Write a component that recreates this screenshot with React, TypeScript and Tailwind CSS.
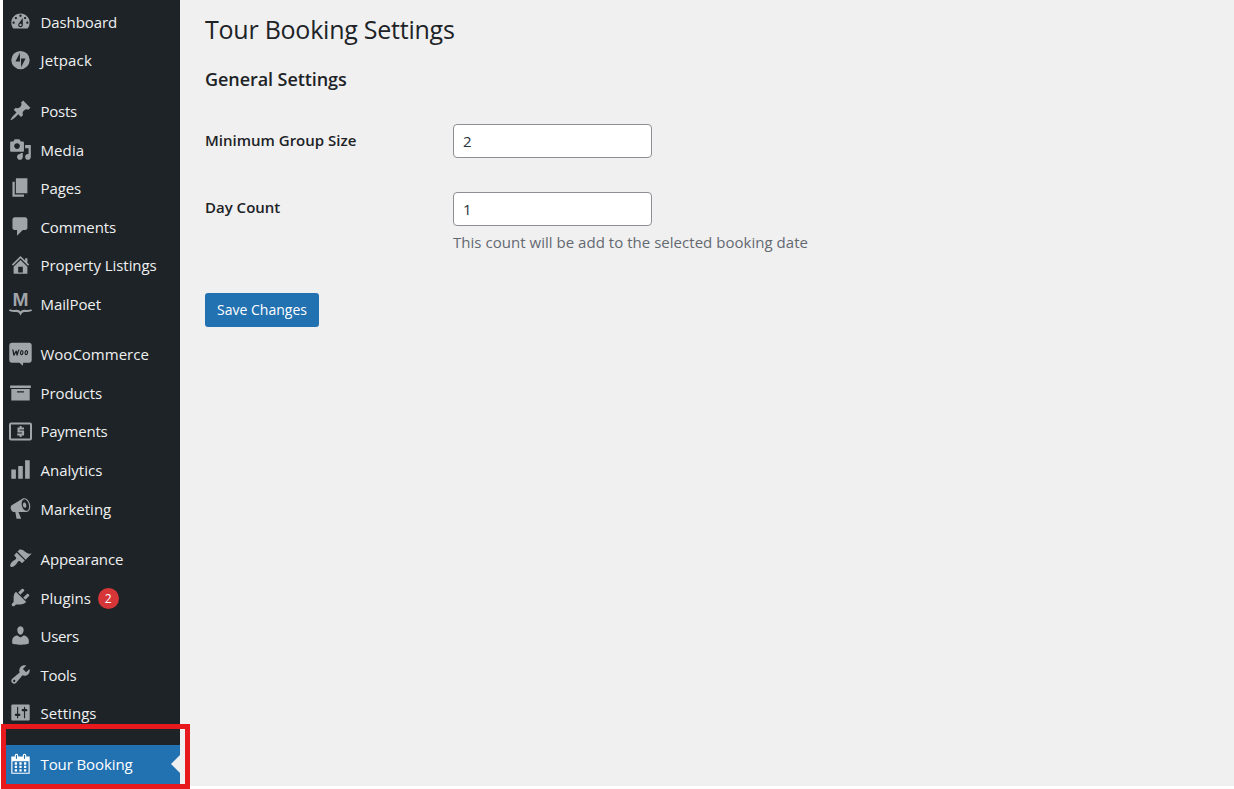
import type { ReactNode } from 'react';

const paths = {
  dashboard:
    'M3.76 16h12.48A7.98 7.98 0 0 0 18 11c0-4.41-3.58-8-8-8s-8 3.59-8 8c0 1.89.66 3.63 1.76 5zM10 4c.55 0 1 .45 1 1s-.45 1-1 1-1-.45-1-1 .45-1 1-1zM6 6c.55 0 1 .45 1 1s-.45 1-1 1-1-.45-1-1 .45-1 1-1zm8 0c.55 0 1 .45 1 1s-.45 1-1 1-1-.45-1-1 .45-1 1-1zm-5.37 5.55L12 7v6c0 1.1-.9 2-2 2s-2-.9-2-2c0-.57.24-1.08.63-1.45zM4 10c.55 0 1 .45 1 1s-.45 1-1 1-1-.45-1-1 .45-1 1-1zm12 0c.55 0 1 .45 1 1s-.45 1-1 1-1-.45-1-1 .45-1 1-1zm-6 2c-.55 0-1 .45-1 1s.45 1 1 1 1-.45 1-1-.45-1-1-1z',
  jetpack:
    'M10 2.500a8 8 0 1 0 0 16 8 8 0 0 0 0-16zM9.500 11.800H5.600L9.500 4.200zm1 5V9.200h3.900z',
  post: 'M10.44 3.02l1.82-1.82 6.36 6.35-1.83 1.82c-1.05-.68-2.48-.57-3.41.36l-.75.75c-.92.93-1.04 2.35-.35 3.41l-1.83 1.82-2.41-2.41-2.8 2.79c-.42.42-3.38 2.71-3.8 2.29s1.86-3.39 2.28-3.81l2.79-2.79L4.1 9.36l1.83-1.82c1.05.69 2.48.57 3.4-.36l.75-.75c.93-.92 1.05-2.35.36-3.41z',
  media:
    'M13 11V4c0-.55-.45-1-1-1h-1.67L9 1H5L3.67 3H2c-.55 0-1 .45-1 1v7c0 .55.45 1 1 1h10c.55 0 1-.45 1-1zM7 4.5c1.38 0 2.5 1.12 2.5 2.5S8.38 9.5 7 9.5 4.5 8.38 4.5 7 5.62 4.5 7 4.5zM14 6h5v10.5c0 1.38-1.12 2.5-2.5 2.5S14 17.88 14 16.5s1.12-2.5 2.5-2.5c.17 0 .34.02.5.05V9h-3V6zm-4 8.05V13h2v3.5c0 1.38-1.12 2.5-2.5 2.5S7 17.88 7 16.5 8.12 14 9.5 14c.17 0 .34.02.5.05z',
  page: 'M6 15V2h10v13H6zm-1 1h8v2H3V5h2v11z',
  comments: 'M5 2h9c1.1 0 2 .9 2 2v7c0 1.1-.9 2-2 2h-2l-5 5v-5H5c-1.1 0-2-.9-2-2V4c0-1.1.9-2 2-2z',
  home: 'M16 8.5l1.53 1.53-1.06 1.06L10 4.6l-6.47 6.49-1.06-1.06L10 2.5l4 4v-2h2v4zm-6-2.46l6 5.99V18H4v-5.97zM12 17v-5H8v5h4z',
  archive: 'M19 4v2H1V4h18zM2 7h16v10H2V7zm11 3V9H7v1h6z',
  chart: 'M18 18V2h-4v16h4zm-6 0V7H8v11h4zm-6 0v-8H2v8h4z',
  megaphone:
    'M18.15 5.94c.46 1.62.38 3.22-.02 4.48-.42 1.28-1.26 2.18-2.3 2.48-.16.06-.26.06-.4.06-.06.02-.12.02-.18.02-.06.02-.14.02-.22.02h-6.8l2.22 5.5c.02.14-.06.26-.14.34-.08.1-.24.16-.34.16H6.95c-.1 0-.26-.06-.34-.16-.08-.08-.16-.2-.14-.34l-1-5.5H4.25l-.02-.02c-.5.06-1.08-.18-1.54-.62s-.88-1.08-1.06-1.88c-.24-.8-.2-1.56-.02-2.2.18-.62.58-1.08 1.06-1.3l.02-.02 9-5.4c.1-.06.18-.1.24-.16.06-.04.14-.08.24-.12.16-.08.28-.12.5-.18 1.04-.3 2.24.1 3.22.98s1.84 2.24 2.26 3.86zm-2.58 5.98h-.02c.4-.1.74-.34 1.04-.7.58-.7.86-1.76.86-3.04 0-.64-.1-1.3-.28-1.98-.34-1.36-1.02-2.5-1.78-3.24s-1.68-1.1-2.46-.88c-.82.22-1.4.96-1.7 2-.32 1.04-.28 2.36.06 3.72.38 1.36 1 2.5 1.8 3.24.78.74 1.62 1.1 2.48.88zm-2.54-7.08c.22-.04.42-.02.62.04.38.16.76.48 1.02 1s.42 1.2.42 1.78c0 .3-.04.56-.12.8-.18.48-.44.84-.86.94-.34.1-.8-.06-1.14-.4s-.64-.86-.78-1.5c-.18-.62-.12-1.24.02-1.72s.48-.84.82-.94z',
  appearance:
    'M14.48 11.06L7.41 3.99l1.5-1.5c.5-.56 2.3-.47 3.51.32 1.21.8 1.43 1.28 2.91 2.1 1.18.64 2.45 1.26 4.45.85zm-.71.71L6.7 4.7 4.93 6.47c-.39.39-.39 1.02 0 1.41l1.06 1.06c.39.39.39 1.03 0 1.42-.6.6-1.43 1.11-2.21 1.69-.35.26-.7.53-1.01.84C1.43 14.23.4 16.08 1.4 17.07c.99 1 2.84-.03 4.18-1.36.31-.31.58-.66.85-1.02.57-.78 1.08-1.61 1.69-2.21.39-.39 1.02-.39 1.41 0l1.06 1.06c.39.39 1.02.39 1.41 0z',
  plugins:
    'M13.11 4.36L9.87 7.6 8 5.73l3.24-3.24c.35-.34 1.05-.2 1.56.32.52.51.66 1.21.31 1.55zm-8 1.77l.91-1.12 9.01 9.01-1.19.84c-.71.71-2.63 1.16-3.82 1.16H6.14L4.9 17.26c-.59.59-1.54.59-2.12 0-.59-.58-.59-1.53 0-2.12l1.24-1.24v-3.88c0-1.13.4-3.19 1.09-3.89zm7.26 3.97l3.24-3.24c.34-.35 1.04-.21 1.55.31.52.51.66 1.21.31 1.55l-3.24 3.25z',
  users:
    'M10 9.25c-2.27 0-2.73-3.44-2.73-3.44C7 4.02 7.82 2 9.97 2c2.16 0 2.98 2.02 2.71 3.81 0 0-.41 3.44-2.68 3.44zm0 2.57L12.72 10c2.39 0 4.52 2.33 4.52 4.53v2.49s-3.65 1.13-7.24 1.13c-3.65 0-7.24-1.13-7.24-1.13v-2.49c0-2.25 1.94-4.48 4.47-4.48z',
  tools:
    'M16.68 9.77c-1.34 1.34-3.3 1.67-4.95.99l-5.41 6.52c-.99.99-2.59.99-3.58 0s-.99-2.59 0-3.57l6.52-5.42c-.68-1.65-.35-3.61.99-4.95 1.28-1.28 3.12-1.62 4.72-1.06l-2.89 2.89 2.82 2.82 2.86-2.87c.53 1.58.18 3.39-1.08 4.65zM3.81 16.21c.4.39 1.04.39 1.43 0 .4-.4.4-1.04 0-1.43-.39-.4-1.03-.4-1.43 0-.39.39-.39 1.03 0 1.43z',
  settings:
    'M18 16V4c0-.55-.45-1-1-1H3c-.55 0-1 .45-1 1v12c0 .55.45 1 1 1h14c.55 0 1-.45 1-1zM8 11h1c.55 0 1 .45 1 1s-.45 1-1 1H8v1.5c0 .28-.22.5-.5.5s-.5-.22-.5-.5V13H6c-.55 0-1-.45-1-1s.45-1 1-1h1V5.5c0-.28.22-.5.5-.5s.5.22.5.5V11zm5-2h-1c-.55 0-1-.45-1-1s.45-1 1-1h1V5.5c0-.28.22-.5.5-.5s.5.22.5.5V7h1c.55 0 1 .45 1 1s-.45 1-1 1h-1v5.5c0 .28-.22.5-.5.5s-.5-.22-.5-.5V9z',
  calendar:
    'M15 4h3v15H2V4h3V3c0-.41.15-.76.44-1.06.29-.29.65-.44 1.06-.44s.77.15 1.06.44c.29.3.44.65.44 1.06v1h4V3c0-.41.15-.76.44-1.06.29-.29.65-.44 1.06-.44s.77.15 1.06.44c.29.3.44.65.44 1.06v1zM6 3v2.5c0 .14.05.26.15.36.09.09.21.14.35.14s.26-.05.35-.14c.1-.1.15-.22.15-.36V3c0-.14-.05-.26-.15-.35-.09-.1-.21-.15-.35-.15s-.26.05-.35.15c-.1.09-.15.21-.15.35zm7 0v2.5c0 .14.05.26.14.36.1.09.22.14.36.14s.26-.05.36-.14c.09-.1.14-.22.14-.36V3c0-.14-.05-.26-.14-.35-.1-.1-.22-.15-.36-.15s-.26.05-.36.15c-.09.09-.14.21-.14.35zm4 15V8H3v10h14zM7 9v2H5V9h2zm2 0h2v2H9V9zm4 2V9h2v2h-2zm-6 1v2H5v-2h2zm2 0h2v2H9v-2zm4 2v-2h2v2h-2zm-6 1v2H5v-2h2zm4 2H9v-2h2v2zm4 0h-2v-2h2v2z',
};

function Glyph({ d }: { d: string }) {
  return (
    <svg viewBox="0 0 20 20" className="block h-[23px] w-[23px] overflow-visible" fill="currentColor" fillRule="evenodd">
      <path d={d} />
    </svg>
  );
}

function MailPoetIcon() {
  return (
    <svg viewBox="0 0 23 23" className="block h-[23px] w-[23px] overflow-visible" fill="none" stroke="currentColor">
      <text x="11.5" y="14.300" textAnchor="middle" textLength="16" lengthAdjust="spacingAndGlyphs" fill="currentColor" stroke="none" className="font-['Liberation_Sans',sans-serif] text-[18px] font-bold">M</text>
      <path d="M.4 18c2.200 1.500 4.700.8 7.100.9 2 .1 3.200.7 4 2.400.8-1.700 2-2.300 4-2.400 2.400-.1 4.900.6 7.100-.9" strokeWidth="2.100" />
    </svg>
  );
}

function WooIcon() {
  return (
    <svg viewBox="0 0 23 23" className="block h-[23px] w-[23px] overflow-visible" fill="none">
      <path d="M3 .8h17a2.700 2.700 0 0 1 2.700 2.700v14.600a2.700 2.700 0 0 1-2.700 2.700h-5.800l-.3 3L10.400 20.800H3a2.700 2.700 0 0 1-2.700-2.700V3.500A2.700 2.700 0 0 1 3 .8z" fill="currentColor" />
      <path d="M3.900 8l1 5.200 2.300-4.100.9 4.100q.6-3.400 1.800-5.200" stroke="#1d2327" strokeWidth="1.300" strokeLinejoin="round" strokeLinecap="round" />
      <ellipse cx="12.700" cy="10.700" rx="1.200" ry="2" transform="rotate(15 12.700 10.700)" stroke="#1d2327" strokeWidth="1.200" />
      <ellipse cx="17.300" cy="10.700" rx="1.200" ry="2" transform="rotate(15 17.300 10.700)" stroke="#1d2327" strokeWidth="1.200" />
    </svg>
  );
}

function PaymentsIcon() {
  return (
    <svg viewBox="0 0 23 23" className="block h-[23px] w-[23px] overflow-visible" fill="none" stroke="currentColor">
      <rect x="1" y="4.500" width="21" height="16" rx="1" strokeWidth="2" />
      <path d="M15 9.400H9.500v3h4.600v3.100H8.200M11.600 7v2M11.600 15.800v2.200" strokeWidth="2" />
    </svg>
  );
}

function MenuItem({ icon, label, tracking, badge, active }: { icon: ReactNode; label: string; tracking?: string; badge?: string; active?: boolean }) {
  return (
    <li className={`relative flex h-[38.55px] shrink-0 items-center pl-[6px] ${active ? 'bg-[#2271b1] text-white' : 'text-[#a0a5aa]'}`}>
      <span className="-mt-[1.5px] mr-[8.5px]">{icon}</span>
      <span className={`whitespace-nowrap ${active ? 'text-white' : 'text-[#f0f0f1]'} ${tracking ?? 'tracking-[-0.1px]'}`}>{label}</span>
      {badge && (
        <span className="mt-[1px] ml-[7px] flex h-[21px] w-[21px] items-center justify-center rounded-full bg-[#d63638] text-[12px] text-white">{badge}</span>
      )}
      {active && (
        <svg viewBox="0 0 9 18" className="absolute top-[10px] right-0 h-[18px] w-[9px]" fill="#f0f0f0">
          <path d="M9 0v18L0 9z" />
        </svg>
      )}
    </li>
  );
}

function Separator() {
  return <li className="h-[12.1px] shrink-0" />;
}

export default function App() {
  return (
    <div className="relative flex h-[789px] w-[1234px] overflow-hidden bg-white pb-[3px] pl-[3px] font-['Open_Sans','Noto_Sans',sans-serif] text-[15px]">
      <ul className="flex h-[783px] w-[177px] shrink-0 flex-col bg-[#1d2327] pt-[2.8px]">
        <MenuItem icon={<Glyph d={paths.dashboard} />} label="Dashboard" />
        <MenuItem icon={<Glyph d={paths.jetpack} />} label="Jetpack" tracking="tracking-[0.15px]" />
        <Separator />
        <MenuItem icon={<Glyph d={paths.post} />} label="Posts" tracking="tracking-[-0.25px]" />
        <MenuItem icon={<Glyph d={paths.media} />} label="Media" tracking="tracking-[0.1px]" />
        <MenuItem icon={<Glyph d={paths.page} />} label="Pages" />
        <MenuItem icon={<Glyph d={paths.comments} />} label="Comments" />
        <MenuItem icon={<Glyph d={paths.home} />} label="Property Listings" tracking="tracking-[-0.05px]" />
        <MenuItem icon={<MailPoetIcon />} label="MailPoet" />
        <Separator />
        <MenuItem icon={<WooIcon />} label="WooCommerce" tracking="tracking-[0px]" />
        <MenuItem icon={<Glyph d={paths.archive} />} label="Products" />
        <MenuItem icon={<PaymentsIcon />} label="Payments" tracking="tracking-[-0.25px]" />
        <MenuItem icon={<Glyph d={paths.chart} />} label="Analytics" tracking="tracking-[0px]" />
        <MenuItem icon={<Glyph d={paths.megaphone} />} label="Marketing" tracking="tracking-[0px]" />
        <Separator />
        <MenuItem icon={<Glyph d={paths.appearance} />} label="Appearance" />
        <MenuItem icon={<Glyph d={paths.plugins} />} label="Plugins" tracking="tracking-[0px]" badge="2" />
        <MenuItem icon={<Glyph d={paths.users} />} label="Users" tracking="tracking-[-0.3px]" />
        <MenuItem icon={<Glyph d={paths.tools} />} label="Tools" tracking="tracking-[-0.3px]" />
        <MenuItem icon={<Glyph d={paths.settings} />} label="Settings" tracking="tracking-[0.05px]" />
        <Separator />
        <MenuItem icon={<Glyph d={paths.calendar} />} label="Tour Booking" active />
      </ul>

      <main className="h-[786px] flex-1 bg-[#f0f0f0] pl-[25px] text-[#1d2327]">
        <h1 className="pt-[12px] text-[25px] leading-[34px] tracking-[-0.24px]">Tour Booking Settings</h1>
        <h2 className="mt-[21px] text-[18px] leading-[24px] font-semibold tracking-[-0.07px]">General Settings</h2>
        <div className="mt-[33px] flex">
          <label htmlFor="group-size" className="w-[248px] pt-[5px] leading-[22px] font-semibold">Minimum Group Size</label>
          <input id="group-size" defaultValue="2" className="h-[34px] w-[199px] rounded-[4px] border border-[#8c8f94] bg-white px-[9px] text-[#2c3338]" />
        </div>
        <div className="mt-[34px] flex">
          <label htmlFor="day-count" className="w-[248px] pt-[4px] leading-[22px] font-semibold">Day Count</label>
          <div>
            <input id="day-count" defaultValue="1" className="block h-[34px] w-[199px] rounded-[4px] border border-[#8c8f94] bg-white px-[9px] text-[#2c3338]" />
            <p className="mt-[5px] leading-[22px] tracking-[0.03px] whitespace-nowrap text-[#646970]">This count will be add to the selected booking date</p>
          </div>
        </div>
        <button className="mt-[40px] h-[34px] w-[114px] rounded-[3px] bg-[#2271b1] pb-[2px] text-[14px] whitespace-nowrap text-white">Save Changes</button>
      </main>

      <div className="pointer-events-none absolute top-[724px] left-[1px] h-[65px] w-[189px] border-[5px] border-[#e8191c]" />
    </div>
  );
}
